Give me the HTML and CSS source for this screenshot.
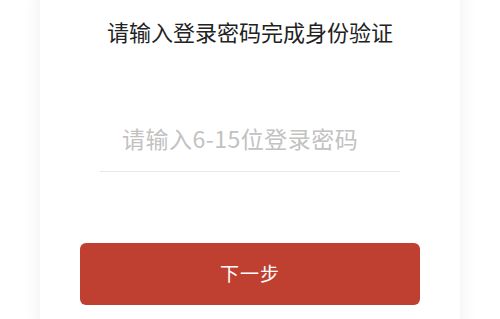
FILE: index.html
```html
<!DOCTYPE html>
<html lang="zh-CN">
<head>
<meta charset="utf-8">
<title>身份验证</title>
<link rel="stylesheet" href="styles.css">
</head>
<body>
<main class="card">
  <div class="title">请输入登录密码完成身份验证</div>
  <div class="field">
    <input class="pwd" type="password" placeholder="请输入6-15位登录密码">
  </div>
  <button class="next" type="button">下一步</button>
</main>
</body>
</html>
```

FILE: styles.css
```css
html, body {
  margin: 0;
  padding: 0;
  background: #ffffff;
  height: 100%;
  overflow: hidden;
}
body {
  font-family: "Noto Sans CJK SC", "Noto Sans", sans-serif;
}
.card {
  margin: 0 40px;
  min-height: 340px;
  margin-top: -10px;
  padding-top: 26px;
  background: #ffffff;
  box-shadow: 0 0 18px rgba(0, 0, 0, 0.07);
  display: flex;
  flex-direction: column;
  box-sizing: border-box;
}
.title {
  margin: 0;
  font-size: 22px;
  line-height: 30px;
  font-weight: 400;
  color: #222222;
  text-align: center;
}
.field {
  margin: 61px 60px 0;
  border-bottom: 1px solid #e8e8e8;
}
.pwd {
  display: block;
  width: 100%;
  box-sizing: border-box;
  height: 64px;
  border: none;
  outline: none;
  padding: 0 0 2px 22px;
  background: transparent;
  font-family: "Noto Sans CJK SC", "Noto Sans", sans-serif;
  font-size: 23px;
  letter-spacing: 0.5px;
  color: #333333;
}
.pwd::placeholder {
  color: #c2c2c2;
}
.next {
  margin: 71px 40px 0;
  height: 62px;
  border: none;
  border-radius: 6px;
  padding: 0 0 3px;
  background: #bf4030;
  color: #ffffff;
  font-family: "Noto Sans CJK SC", "Noto Sans", sans-serif;
  font-size: 19px;
  letter-spacing: 1px;
}
```
